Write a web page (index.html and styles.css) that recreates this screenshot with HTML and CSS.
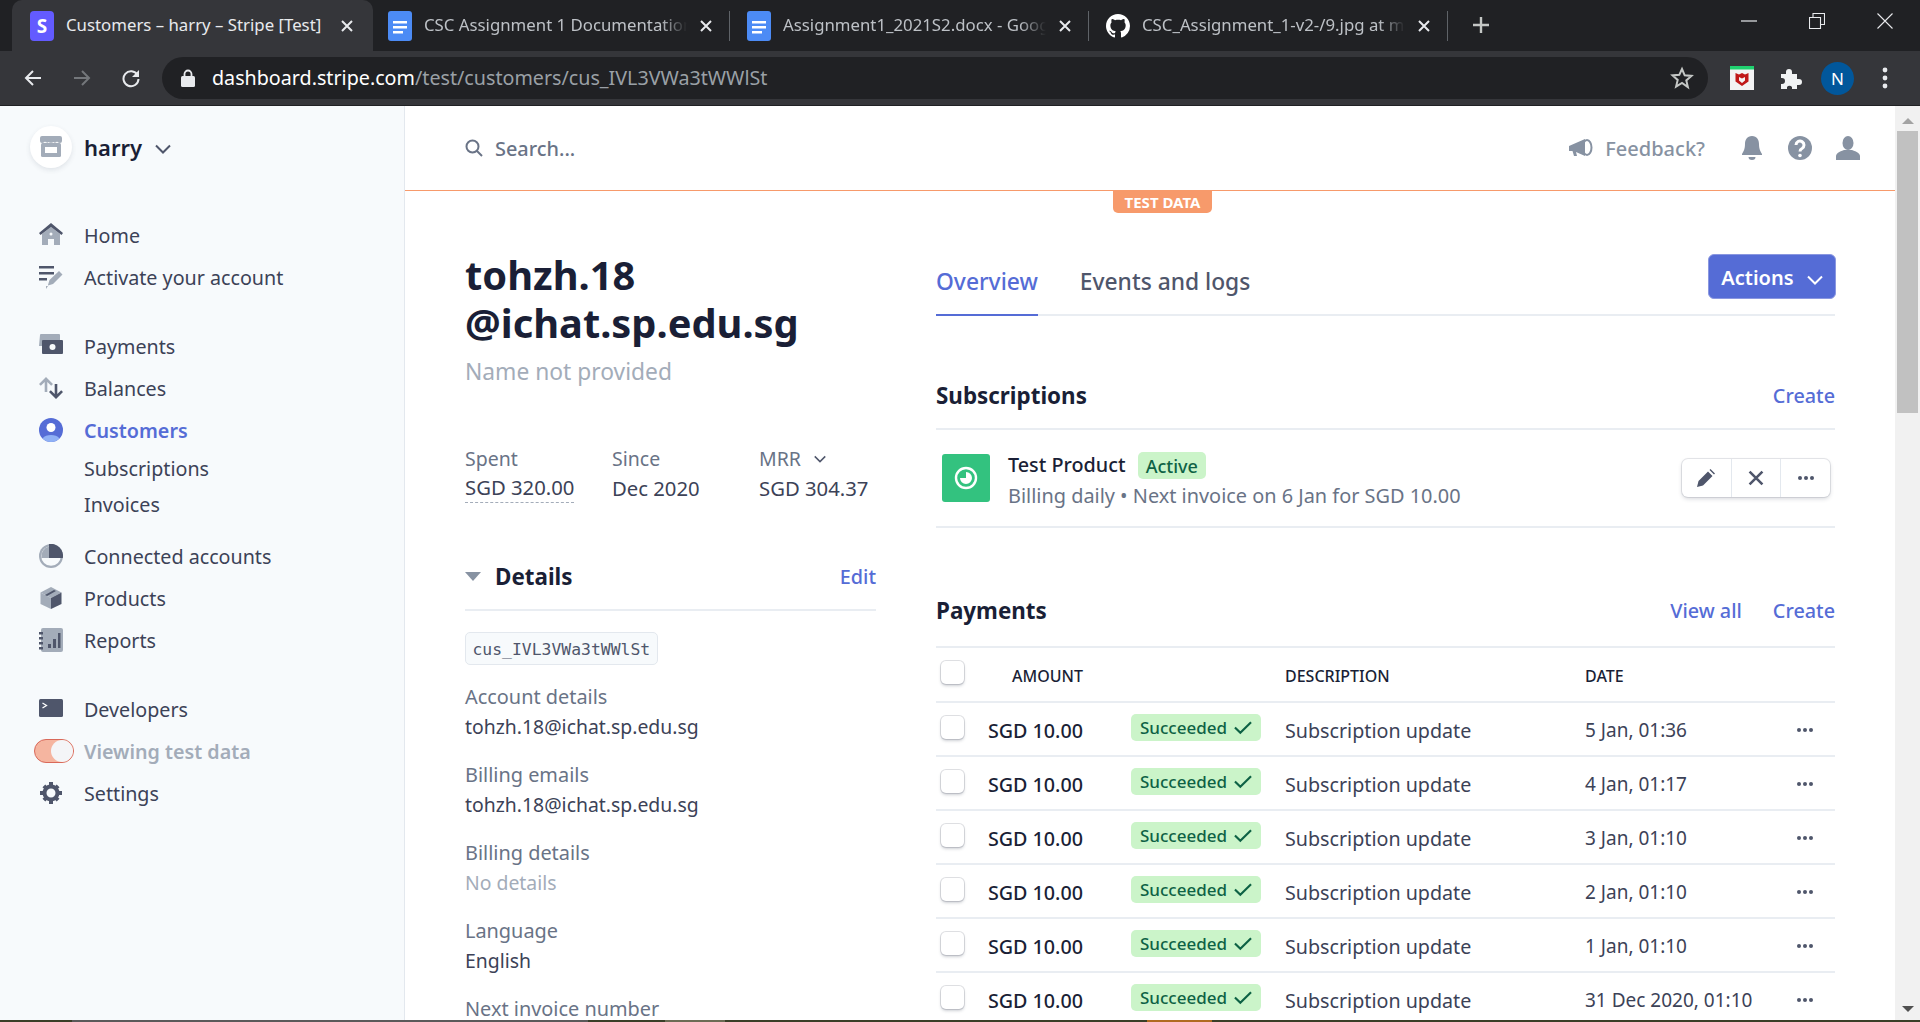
FILE: index.html
```html
<!DOCTYPE html>
<html>
  <head>
    <meta charset="utf-8">
    <title>Customers – harry – Stripe [Test]</title>
    <link rel="stylesheet" href="styles.css">
  </head>
  <body>
    <svg class="defs" width="0" height="0">
      <symbol id="doc" viewBox="0 0 24 30"><rect width="24" height="30" rx="3" fill="#4c8bf5"/><path d="M5 10h14v2.600H5zM5 15h14v2.600H5zM5 20h10v2.600H5z" fill="#fff"/></symbol>
      <symbol id="close" viewBox="0 0 14 14"><path d="M2 2l10 10M12 2L2 12" stroke="currentColor" stroke-width="2" fill="none"/></symbol>
      <symbol id="dots" viewBox="0 0 18 6"><circle cx="3" cy="3" r="2"/><circle cx="9" cy="3" r="2"/><circle cx="15" cy="3" r="2"/></symbol>
      <symbol id="check" viewBox="0 0 18 14"><path d="M1.500 7l5 5L16.500 2" stroke="#0e6245" stroke-width="2" fill="none"/></symbol>
      <symbol id="chev" viewBox="0 0 16 10"><path d="M1 1.500l7 7 7-7" stroke="currentColor" stroke-width="2" fill="none"/></symbol>
    </svg>

    <div class="tabstrip">
      <div class="tab tab-active">
        <span class="fav-stripe">S</span>
        <span class="tab-title">Customers – harry – Stripe [Test]</span>
        <svg class="tab-close"><use href="#close"/></svg>
      </div>
      <div class="tab">
        <svg class="fav"><use href="#doc"/></svg>
        <span class="tab-title">CSC Assignment 1 Documentation</span>
        <svg class="tab-close"><use href="#close"/></svg>
      </div>
      <div class="tab">
        <svg class="fav"><use href="#doc"/></svg>
        <span class="tab-title">Assignment1_2021S2.docx - Google Docs</span>
        <svg class="tab-close"><use href="#close"/></svg>
      </div>
      <div class="tab">
        <svg class="fav fav-gh" viewBox="0 0 16 16"><path fill="#fff" d="M8 0C3.58 0 0 3.58 0 8c0 3.54 2.29 6.53 5.47 7.59.4.07.55-.17.55-.38 0-.19-.01-.82-.01-1.49-2.01.37-2.53-.49-2.69-.94-.09-.23-.48-.94-.82-1.13-.28-.15-.68-.52-.01-.53.63-.01 1.08.58 1.23.82.72 1.21 1.87.87 2.33.66.07-.52.28-.87.51-1.07-1.78-.2-3.64-.89-3.64-3.95 0-.87.31-1.59.82-2.15-.08-.2-.36-1.02.08-2.12 0 0 .67-.21 2.2.82.64-.18 1.32-.27 2-.27.68 0 1.36.09 2 .27 1.53-1.04 2.2-.82 2.2-.82.44 1.1.16 1.92.08 2.12.51.56.82 1.27.82 2.15 0 3.07-1.87 3.75-3.65 3.95.29.25.54.73.54 1.48 0 1.07-.01 1.93-.01 2.2 0 .21.15.46.55.38A8.013 8.013 0 0016 8c0-4.42-3.58-8-8-8z"/></svg>
        <span class="tab-title">CSC_Assignment_1-v2-/9.jpg at main</span>
        <svg class="tab-close"><use href="#close"/></svg>
      </div>
      <svg class="newtab" viewBox="0 0 18 18"><path d="M9 1v16M1 9h16" stroke="#c4c7c5" stroke-width="2.400"/></svg>
      <div class="winctl">
        <svg viewBox="0 0 16 16"><path d="M0 8h16" stroke="#e8eaed" stroke-width="1.200"/></svg>
        <svg viewBox="0 0 16 16"><path d="M.5 4.500h11v11H.5zM4 4.500V.5h11.500v11H11.500" stroke="#e8eaed" stroke-width="1.100" fill="none"/></svg>
        <svg viewBox="0 0 16 16"><path d="M.5.5l15 15M15.500.5l-15 15" stroke="#e8eaed" stroke-width="1.100"/></svg>
      </div>
    </div>

    <div class="toolbar">
      <svg class="tool" viewBox="0 0 20 20"><path d="M18 10H3M10 3l-7 7 7 7" stroke="#e8eaed" stroke-width="2" fill="none"/></svg>
      <svg class="tool" viewBox="0 0 20 20"><path d="M2 10h15M10 3l7 7-7 7" stroke="#74777b" stroke-width="2" fill="none"/></svg>
      <svg class="tool" viewBox="0 0 20 20"><path d="M16.500 7A7.500 7.500 0 1 0 17.500 11" stroke="#e8eaed" stroke-width="2" fill="none"/><path d="M18 2v7h-7z" fill="#e8eaed"/></svg>
      <div class="omnibox">
        <svg class="lock" viewBox="0 0 14 18"><path d="M3.500 8V5a3.500 3.500 0 0 1 7 0v3" stroke="#e8eaed" stroke-width="1.800" fill="none"/><rect y="7" width="14" height="11" rx="1.500" fill="#e8eaed"/></svg>
        <span class="url"><b>dashboard.stripe.com</b>/test/customers/cus_IVL3VWa3tWWlSt</span>
        <svg class="star" viewBox="0 0 24 24"><path d="M12 3l2.700 6.300 6.800.6-5.200 4.500 1.600 6.700L12 17l-5.900 3.600 1.600-6.700-5.200-4.500 6.800-.6z" stroke="#c4c7c5" stroke-width="2" fill="none"/></svg>
      </div>
      <div class="ext-mcafee">
        <svg viewBox="0 0 24 24"><rect width="24" height="24" fill="#f3f3f3"/><rect width="24" height="3.500" fill="#1fd16f"/><path d="M5.500 7l3.500 1.500L12 7l3 1.500L18.500 7v8.500L12 20l-6.500-4.500z" fill="#c01818"/><path d="M9 11l3 1.500 3-1.500v3.500L12 17l-3-2.500z" fill="#f3f3f3"/></svg>
      </div>
      <svg class="ext-puzzle" viewBox="0 0 24 24"><path fill="#f1f3f4" d="M3 8h5V6a3 3 0 0 1 6 0v2h5v5h2a3 3 0 0 1 0 6h-2v4h-5v-2a3 3 0 0 0-5 0v2H3v-5h1a3 3 0 0 0 0-6H3z"/></svg>
      <span class="avatar">N</span>
      <svg class="menu" viewBox="0 0 6 24"><circle cx="3" cy="4" r="2.400"/><circle cx="3" cy="12" r="2.400"/><circle cx="3" cy="20" r="2.400"/></svg>
    </div>

    <div class="app">
      <aside class="sidebar">
        <div class="account">
          <span class="account-logo">
            <svg viewBox="0 0 24 24"><rect x="2" y="8" width="20" height="14" rx="1.500" fill="#a3acb9"/><rect x="6" y="12" width="12" height="6" fill="#fff"/><path d="M3 1h18a2 2 0 0 1 2 2v3a2 2 0 0 1-2 2c-1.500 0-2.500-1-3-1.500C17 8 15 8 14.500 7c-.5 1-4.500 1-5 0C9 8 7 8 6 6.500 5.500 7 4.500 8 3 8a2 2 0 0 1-2-2V3a2 2 0 0 1 2-2z" fill="#a3acb9"/></svg>
          </span>
          <span class="account-name">harry</span>
          <svg class="account-chev"><use href="#chev"/></svg>
        </div>

        <nav class="nav-group nav-first">
          <a class="nav-row">
            <svg class="nav-icon" viewBox="0 0 24 24"><path d="M3 11l9-7 9 7v11h-6v-6H9v6H3z" fill="#a3acb9"/><path d="M12 0L0 10l1.500 2L12 4l10.500 8 1.500-2z" fill="#4f566b"/><circle cx="12" cy="11" r="1.500" fill="#f7fafc"/></svg>
            Home
          </a>
          <a class="nav-row">
            <svg class="nav-icon" viewBox="0 0 24 24"><path d="M0 1h15v2.400H0zM0 7h15v2.400H0zM0 13h8v2.400H0z" fill="#4f566b"/><path d="M9 20l1.500-5L20 6l3.500 3.500-9.500 9.500-5 1.500zM7 24l2-3h-2z" fill="#a3acb9"/></svg>
            Activate your account
          </a>
        </nav>

        <nav class="nav-group nav-second">
          <a class="nav-row">
            <svg class="nav-icon" viewBox="0 0 24 24"><path d="M1 1a1 1 0 0 1 1-1h18a1 1 0 0 1 1 1v11H0z" fill="#a3acb9"/><rect x="3" y="6" width="21" height="14" rx="1" fill="#4f566b"/><circle cx="13.500" cy="13" r="3" fill="#f7fafc"/></svg>
            Payments
          </a>
          <a class="nav-row">
            <svg class="nav-icon" viewBox="0 0 24 24"><path d="M7 1L0 8l1.800 1.800L5.700 6v10h2.600V6l3.900 3.800L14 8z" fill="#a3acb9"/><path d="M17 23l7-7-1.800-1.800L18.300 18V8h-2.600v10l-3.900-3.800L10 16z" fill="#4f566b"/></svg>
            Balances
          </a>
          <a class="nav-row nav-active">
            <svg class="nav-icon" viewBox="0 0 24 24"><circle cx="12" cy="12" r="12" fill="#556cd6"/><circle cx="12" cy="9.500" r="4.500" fill="#fff"/><path d="M3.500 20.500C5.500 17.500 8.500 17 12 17s6.500.5 8.500 3.500A12 12 0 0 1 12 24a12 12 0 0 1-8.500-3.500z" fill="#8fb0f5"/></svg>
            Customers
          </a>
          <a class="nav-sub">Subscriptions</a>
          <a class="nav-sub">Invoices</a>
        </nav>

        <nav class="nav-group nav-third">
          <a class="nav-row">
            <svg class="nav-icon" viewBox="0 0 24 24"><circle cx="12" cy="12" r="12" fill="#a3acb9"/><circle cx="12" cy="12" r="9.800" fill="#f7fafc"/><path d="M10 2.500A9.800 9.800 0 0 0 2.500 14H10z" fill="#a3acb9"/><path d="M10 0a12 12 0 0 1 13.800 14H10z" fill="#4f566b"/></svg>
            Connected accounts
          </a>
          <a class="nav-row">
            <svg class="nav-icon" viewBox="0 0 24 24"><path d="M12 1l10.500 5.500L12 12 1.500 6.500z" fill="#a3acb9"/><path d="M1.500 6.500L12 12v11L1.500 18z" fill="#a3acb9"/><path d="M22.500 6.500L12 12v11l10.500-5z" fill="#4f566b"/><path d="M6 9l9-5 2 1-9 5z" fill="#4f566b"/></svg>
            Products
          </a>
          <a class="nav-row">
            <svg class="nav-icon" viewBox="0 0 24 24"><rect x="2" width="22" height="24" rx="2" fill="#a3acb9"/><path d="M0 4h4v2.500H0zM0 9h4v2.500H0zM0 14h4v2.500H0zM0 19h4v2.500H0z" fill="#4f566b"/><path d="M9 16h3v4H9zM14 11h3v9h-3zM19 5h2.500v15H19z" fill="#4f566b"/></svg>
            Reports
          </a>
        </nav>

        <nav class="nav-group nav-fourth">
          <a class="nav-row">
            <svg class="nav-icon" viewBox="0 0 24 24"><rect y="2" width="24" height="18" rx="1.500" fill="#4f566b"/><path d="M3.500 6l4 2.500-4 2.500" stroke="#fff" stroke-width="1.300" fill="none"/></svg>
            Developers
          </a>
          <a class="nav-row nav-muted">
            <span class="toggle"><span class="toggle-knob"></span></span>
            Viewing test data
          </a>
          <a class="nav-row">
            <svg class="nav-icon" viewBox="0 0 24 24"><circle cx="12" cy="12" r="6.500" fill="none" stroke="#4f566b" stroke-width="4"/><path d="M10 1h4v5h-4zM10 18h4v5h-4zM1 10h5v4H1zM18 10h5v4h-5zM3.500 6.300l2.800-2.800 3 3-2.800 2.800zM14.700 17.500l2.800-2.800 3 3-2.800 2.800zM3.500 17.700l3-3 2.800 2.800-3 3zM14.700 6.500l3-3 2.800 2.800-3 3z" fill="#4f566b"/></svg>
            Settings
          </a>
        </nav>
      </aside>

      <main class="main">
        <header class="topbar">
          <svg class="search-icon" viewBox="0 0 18 18"><circle cx="7.500" cy="7.500" r="6" stroke="#697386" stroke-width="2" fill="none"/><path d="M12 12l5 5" stroke="#697386" stroke-width="2"/></svg>
          <span class="search-text">Search...</span>
          <svg class="feedback-icon" viewBox="0 0 24 18"><path d="M0 7l16-7v17L7 13l1 4H5l-1.500-5H0z" fill="#8792a2"/><ellipse cx="18" cy="8.500" rx="4.500" ry="7.500" fill="none" stroke="#8792a2" stroke-width="2"/></svg>
          <span class="feedback-text">Feedback?</span>
          <svg class="top-icon" viewBox="0 0 24 24"><path d="M12 0c-5 0-7 4-7 8 0 6-2 8-3 10v1h20v-1c-1-2-3-4-3-10 0-4-2-8-7-8z" fill="#8792a2"/><path d="M8.500 21h7a3.500 3 0 0 1-7 0z" fill="#8792a2"/></svg>
          <svg class="top-icon" viewBox="0 0 24 24"><circle cx="12" cy="12" r="12" fill="#8792a2"/><path d="M8 9a4 4 0 1 1 6 3.500c-1.500.8-2 1.500-2 3" stroke="#fff" stroke-width="3" fill="none"/><circle cx="12" cy="19.500" r="1.800" fill="#fff"/></svg>
          <svg class="top-icon" viewBox="0 0 24 24"><ellipse cx="12" cy="7" rx="5.500" ry="7" fill="#8792a2"/><path d="M0 24v-4c0-3 5-5 8-6h8c3 1 8 3 8 6v4z" fill="#8792a2"/></svg>
        </header>
        <span class="test-tag">TEST DATA</span>

        <div class="content">
          <section class="left-col">
            <h1 class="cust-title">tohzh.18<br>@ichat.sp.edu.sg</h1>
            <p class="cust-name">Name not provided</p>

            <div class="stats">
              <div class="stat stat-spent">
                <span class="stat-label">Spent</span>
                <span class="stat-value stat-dashed">SGD 320.00</span>
              </div>
              <div class="stat stat-since">
                <span class="stat-label">Since</span>
                <span class="stat-value">Dec 2020</span>
              </div>
              <div class="stat">
                <span class="stat-label">MRR <svg class="mrr-chev"><use href="#chev"/></svg></span>
                <span class="stat-value">SGD 304.37</span>
              </div>
            </div>

            <div class="details-head">
              <span class="caret"></span>
              <h2 class="details-title">Details</h2>
              <a class="link">Edit</a>
            </div>

            <code class="cust-id">cus_IVL3VWa3tWWlSt</code>

            <dl class="props">
              <dt>Account details</dt>
              <dd>tohzh.18@ichat.sp.edu.sg</dd>
              <dt>Billing emails</dt>
              <dd>tohzh.18@ichat.sp.edu.sg</dd>
              <dt>Billing details</dt>
              <dd class="prop-empty">No details</dd>
              <dt>Language</dt>
              <dd>English</dd>
              <dt>Next invoice number</dt>
            </dl>
          </section>

          <section class="right-col">
            <div class="tabs">
              <a class="tabs-item tabs-current">Overview</a>
              <a class="tabs-item">Events and logs</a>
              <button class="actions">Actions <svg class="actions-chev"><use href="#chev"/></svg></button>
            </div>

            <div class="section-head section-subs">
              <h2 class="section-title">Subscriptions</h2>
              <a class="link">Create</a>
            </div>
            <div class="sub-row">
              <span class="sub-icon">
                <svg viewBox="0 0 24 24"><circle cx="12" cy="12" r="10" fill="none" stroke="#fff" stroke-width="2.400"/><path d="M12 6a6 6 0 1 1-6 6h6z" fill="#fff"/></svg>
              </span>
              <div class="sub-info">
                <div class="sub-name">Test Product <span class="badge badge-active">Active</span></div>
                <div class="sub-meta">Billing daily • Next invoice on 6 Jan for SGD 10.00</div>
              </div>
              <div class="btn-group">
                <span class="btn-cell"><svg class="btn-icon" viewBox="0 0 18 18"><path d="M0 18l1.500-6L11 2.500l4.500 4.500L6 16.500zM12.500 1l1-1L18 4.500l-1 1z" fill="#4f566b"/></svg></span>
                <span class="btn-cell"><svg class="btn-icon-x"><use href="#close"/></svg></span>
                <span class="btn-cell"><svg class="dots"><use href="#dots"/></svg></span>
              </div>
            </div>

            <div class="section-head section-pay">
              <h2 class="section-title">Payments</h2>
              <a class="link link-viewall">View all</a>
              <a class="link">Create</a>
            </div>

            <div class="pay-table">
              <div class="pay-row pay-head">
                <span class="check"></span>
                <span class="col-amount">AMOUNT</span>
                <span class="col-status"></span>
                <span class="col-desc">DESCRIPTION</span>
                <span class="col-date">DATE</span>
              </div>
              <div class="pay-row">
                <span class="check"></span>
                <span class="col-amount">SGD 10.00</span>
                <span class="col-status"><span class="badge badge-ok">Succeeded <svg class="ok-check"><use href="#check"/></svg></span></span>
                <span class="col-desc">Subscription update</span>
                <span class="col-date">5 Jan, 01:36</span>
                <svg class="dots"><use href="#dots"/></svg>
              </div>
              <div class="pay-row">
                <span class="check"></span>
                <span class="col-amount">SGD 10.00</span>
                <span class="col-status"><span class="badge badge-ok">Succeeded <svg class="ok-check"><use href="#check"/></svg></span></span>
                <span class="col-desc">Subscription update</span>
                <span class="col-date">4 Jan, 01:17</span>
                <svg class="dots"><use href="#dots"/></svg>
              </div>
              <div class="pay-row">
                <span class="check"></span>
                <span class="col-amount">SGD 10.00</span>
                <span class="col-status"><span class="badge badge-ok">Succeeded <svg class="ok-check"><use href="#check"/></svg></span></span>
                <span class="col-desc">Subscription update</span>
                <span class="col-date">3 Jan, 01:10</span>
                <svg class="dots"><use href="#dots"/></svg>
              </div>
              <div class="pay-row">
                <span class="check"></span>
                <span class="col-amount">SGD 10.00</span>
                <span class="col-status"><span class="badge badge-ok">Succeeded <svg class="ok-check"><use href="#check"/></svg></span></span>
                <span class="col-desc">Subscription update</span>
                <span class="col-date">2 Jan, 01:10</span>
                <svg class="dots"><use href="#dots"/></svg>
              </div>
              <div class="pay-row">
                <span class="check"></span>
                <span class="col-amount">SGD 10.00</span>
                <span class="col-status"><span class="badge badge-ok">Succeeded <svg class="ok-check"><use href="#check"/></svg></span></span>
                <span class="col-desc">Subscription update</span>
                <span class="col-date">1 Jan, 01:10</span>
                <svg class="dots"><use href="#dots"/></svg>
              </div>
              <div class="pay-row">
                <span class="check"></span>
                <span class="col-amount">SGD 10.00</span>
                <span class="col-status"><span class="badge badge-ok">Succeeded <svg class="ok-check"><use href="#check"/></svg></span></span>
                <span class="col-desc">Subscription update</span>
                <span class="col-date">31 Dec 2020, 01:10</span>
                <svg class="dots"><use href="#dots"/></svg>
              </div>
            </div>
          </section>
        </div>
      </main>

      <div class="scrollbar">
        <span class="scroll-up"></span>
        <span class="scroll-thumb"></span>
        <span class="scroll-down"></span>
      </div>
    </div>

    <div class="desktop-edge">
      <span class="edge-a"></span>
      <span class="edge-b"></span>
      <span class="edge-c"></span>
      <span class="edge-d"></span>
      <span class="edge-e"></span>
    </div>
  </body>
</html>
```

FILE: styles.css
```css
* {
  box-sizing: border-box;
}
html,
body {
  margin: 0;
  width: 1920px;
  height: 1022px;
  overflow: hidden;
  background: #fff;
  font-family: 'Noto Sans', 'Open Sans', sans-serif;
  color: #3c4257;
}
h1,
h2,
p,
dl,
dd {
  margin: 0;
}
.defs {
  position: absolute;
}

/* browser chrome */
.tabstrip {
  height: 51px;
  background: #202124;
  display: flex;
  padding-left: 12px;
}
.tab {
  width: 359px;
  height: 51px;
  flex: none;
  display: flex;
  align-items: center;
  padding: 0 17px 0 17px;
  position: relative;
  color: #bdc1c6;
}
.tab::after {
  content: '';
  position: absolute;
  right: 0;
  top: 11px;
  height: 30px;
  width: 1px;
  background: #5f6368;
}
.tab-active {
  width: 361px;
  margin-right: -2px;
  background: #35363a;
  color: #e8eaed;
  border-radius: 10px 10px 0 0;
  padding: 0 19px 0 18px;
}
.tab-active::after {
  display: none;
}
.tab-title {
  flex: 1;
  min-width: 0;
  margin: 0 0 3px 12px;
  font-size: 16.800px;
  white-space: nowrap;
  overflow: hidden;
  -webkit-mask-image: linear-gradient(to right, #000 90%, transparent 100%);
  mask-image: linear-gradient(to right, #000 90%, transparent 100%);
}
.tab-active .tab-title {
  -webkit-mask-image: none;
  mask-image: none;
}
.tab-close {
  width: 14px;
  height: 14px;
  flex: none;
  margin-left: 12px;
  color: #e8eaed;
}
.fav {
  width: 24px;
  height: 30px;
  flex: none;
}
.fav-gh {
  height: 24px;
}
.fav-stripe {
  width: 24px;
  height: 30px;
  flex: none;
  border-radius: 4px;
  background: #635bff;
  color: #fff;
  font-weight: 700;
  font-size: 19px;
  line-height: 30px;
  text-align: center;
}
.newtab {
  width: 18px;
  height: 18px;
  margin: 16px 0 0 24px;
}
.winctl {
  margin-left: auto;
  display: flex;
  gap: 52px;
  padding: 13px 27px 0 0;
}
.winctl svg {
  width: 16px;
  height: 16px;
}

.toolbar {
  height: 55px;
  background: #35363a;
  border-bottom: 1px solid #202124;
  display: flex;
  align-items: center;
  padding-left: 23px;
}
.tool {
  width: 20px;
  height: 20px;
  margin-right: 29px;
}
.omnibox {
  width: 1546px;
  height: 42px;
  margin-left: -8px;
  border-radius: 21px;
  background: #202124;
  display: flex;
  align-items: center;
  padding: 0 14px 0 19px;
}
.lock {
  width: 14px;
  height: 18px;
}
.url {
  margin: 0 0 2px 17px;
  font-size: 19.700px;
  color: #9aa0a6;
  flex: 1;
}
.url b {
  font-weight: 400;
  color: #fff;
}
.star {
  width: 24px;
  height: 24px;
}
.ext-mcafee {
  width: 24px;
  height: 24px;
  margin-left: 22px;
}
.ext-mcafee svg {
  display: block;
}
.ext-puzzle {
  width: 24px;
  height: 24px;
  margin-left: 24px;
}
.avatar {
  width: 33px;
  height: 33px;
  margin-left: 19px;
  border-radius: 50%;
  background: #01579b;
  color: #fff;
  font-size: 17px;
  line-height: 33px;
  text-align: center;
}
.menu {
  width: 6px;
  height: 24px;
  margin-left: 28px;
  fill: #e8eaed;
}

/* app layout */
.app {
  display: flex;
  height: 914px;
}
.sidebar {
  width: 405px;
  flex: none;
  background: #f7fafc;
  border-right: 1px solid #e3e8ee;
  padding: 20px 0 0 39px;
}
.account {
  display: flex;
  align-items: center;
  margin-left: -9px;
}
.account-logo {
  width: 42px;
  height: 42px;
  border-radius: 50%;
  background: #fff;
  box-shadow: 0 2px 5px rgba(60, 66, 87, 0.12);
  display: flex;
  align-items: center;
  justify-content: center;
}
.account-logo svg {
  width: 24px;
  height: 24px;
}
.account-name {
  margin-left: 12px;
  font-size: 22px;
  font-weight: 600;
  color: #1a1f36;
}
.account-chev {
  width: 16px;
  height: 10px;
  margin: 4px 0 0 13px;
  color: #4f566b;
}
.nav-first {
  margin-top: 46px;
}
.nav-second {
  margin-top: 27px;
}
.nav-third {
  margin-top: 12px;
}
.nav-fourth {
  margin-top: 27px;
}
.nav-row {
  height: 42px;
  display: flex;
  align-items: center;
  gap: 21px;
  font-size: 19.700px;
}
.nav-icon {
  width: 24px;
  height: 24px;
  flex: none;
}
.nav-active {
  color: #556cd6;
  font-weight: 600;
}
.nav-muted {
  color: #a3acb9;
  font-weight: 600;
}
.nav-sub {
  display: block;
  height: 36px;
  line-height: 36px;
  padding-left: 45px;
  font-size: 19.700px;
}
.toggle {
  width: 40px;
  height: 24px;
  margin: 0 -11px 0 -5px;
  border-radius: 12px;
  background: #f5b5a0;
  border: 1px solid #d9695a;
  position: relative;
  flex: none;
}
.toggle-knob {
  position: absolute;
  right: 0;
  top: 0;
  width: 22px;
  height: 22px;
  border-radius: 50%;
  background: #f4f5f7;
}

.main {
  flex: 1;
  position: relative;
  overflow: hidden;
}
.topbar {
  height: 85px;
  border-bottom: 1px solid #f79a6b;
  display: flex;
  align-items: center;
  padding: 0 35px 0 60px;
}
.search-icon {
  width: 18px;
  height: 18px;
}
.search-text {
  margin-left: 12px;
  font-size: 19.900px;
  font-weight: 500;
  color: #697386;
  flex: 1;
}
.feedback-icon {
  width: 24px;
  height: 18px;
}
.feedback-text {
  margin: 0 35px 0 12px;
  font-size: 20px;
  font-weight: 500;
  color: #8792a2;
}
.top-icon {
  width: 24px;
  height: 24px;
  margin-left: 24px;
}
.feedback-text + .top-icon {
  margin-left: 0;
}
.test-tag {
  position: absolute;
  left: 708px;
  top: 85px;
  width: 99px;
  height: 22px;
  border-radius: 0 0 5px 5px;
  background: #f79a6b;
  color: #fff;
  font-size: 15px;
  font-weight: 700;
  line-height: 22px;
  text-align: center;
}
.content {
  display: flex;
  gap: 60px;
  padding: 60px 60px 0 60px;
}

/* left column */
.left-col {
  width: 411px;
  flex: none;
}
.cust-title {
  font-size: 39.800px;
  line-height: 48px;
  font-weight: 700;
  color: #1a1f36;
}
.cust-name {
  margin-top: 10px;
  font-size: 22.800px;
  line-height: 30px;
  color: #a3acb9;
}
.stats {
  display: flex;
  margin-top: 57px;
}
.stat {
  display: flex;
  flex-direction: column;
  align-items: flex-start;
}
.stat-spent,
.stat-since {
  width: 147px;
}
.stat-label {
  font-size: 19.500px;
  line-height: 30px;
  color: #697386;
}
.stat-value {
  margin-top: -1px;
  font-size: 20.300px;
  line-height: 30px;
  color: #3c4257;
}
.stat-dashed {
  border-bottom: 1px dashed #a3acb9;
  line-height: 29px;
}
.mrr-chev {
  width: 12px;
  height: 8px;
  margin-left: 8px;
  color: #4f566b;
  vertical-align: 3px;
}
.details-head {
  display: flex;
  align-items: center;
  margin-top: 53px;
  height: 55px;
  border-bottom: 2px solid #e9edf2;
  padding-bottom: 12px;
}
.caret {
  width: 0;
  height: 0;
  border-left: 8px solid transparent;
  border-right: 8px solid transparent;
  border-top: 9px solid #8792a2;
}
.details-title {
  flex: 1;
  margin-left: 14px;
  font-size: 22.400px;
  font-weight: 700;
  color: #1a1f36;
}
.link {
  font-size: 19.800px;
  color: #556cd6;
  font-weight: 500;
}
.cust-id {
  display: inline-block;
  margin-top: 21px;
  height: 33px;
  padding: 0 6.500px;
  border: 1px solid #e3e8ee;
  border-radius: 5px;
  background: #f7fafc;
  font-family: 'DejaVu Sans Mono', monospace;
  font-size: 16.400px;
  line-height: 33px;
  color: #4f566b;
}
.props {
  margin-top: 17px;
}
.props dt {
  font-size: 19.900px;
  line-height: 30px;
  color: #697386;
}
.props dd {
  font-size: 19.400px;
  line-height: 30px;
  margin-bottom: 18px;
  color: #3c4257;
}
.props .prop-empty {
  color: #a3acb9;
}

/* right column */
.right-col {
  flex: 1;
  min-width: 0;
}
.tabs {
  display: flex;
  align-items: flex-start;
  height: 65px;
  gap: 42px;
  border-bottom: 2px solid #e9edf2;
  position: relative;
}
.tabs-item {
  font-size: 22.800px;
  line-height: 30px;
  padding: 16px 0 17px;
  font-weight: 500;
  color: #4f566b;
  height: 65px;
}
.tabs-current {
  color: #556cd6;
  border-bottom: 2px solid #556cd6;
}
.actions {
  margin: 3px -1px 0 auto;
  width: 128px;
  height: 45px;
  border: 1px solid #8a97e0;
  border-radius: 6px;
  background: #556cd6;
  color: #fff;
  font-family: inherit;
  font-size: 20px;
  font-weight: 600;
  padding: 1px 0 0;
}
.actions-chev {
  width: 16px;
  height: 10px;
  margin-left: 8px;
}
.section-head {
  display: flex;
  align-items: center;
  height: 42px;
}
.section-subs {
  margin-top: 58px;
}
.section-pay {
  margin-top: 61px;
}
.section-title {
  flex: 1;
  font-size: 22.400px;
  font-weight: 700;
  color: #1a1f36;
}
.link-viewall {
  margin-right: 31px;
}
.sub-row {
  height: 100px;
  margin-top: 12px;
  border-top: 2px solid #e9edf2;
  border-bottom: 2px solid #e9edf2;
  display: flex;
  align-items: center;
  padding: 0 5px 0 6px;
}
.sub-icon {
  width: 48px;
  height: 48px;
  border-radius: 3px;
  background: #33c27f;
  display: flex;
  align-items: center;
  justify-content: center;
}
.sub-icon svg {
  width: 24px;
  height: 24px;
}
.sub-info {
  flex: 1;
  margin-left: 18px;
  padding-top: 4px;
}
.sub-name {
  font-size: 19.800px;
  line-height: 30px;
  font-weight: 500;
  color: #1a1f36;
}
.sub-meta {
  margin-top: 1px;
  font-size: 19.900px;
  line-height: 30px;
  color: #697386;
}
.badge {
  display: inline-flex;
  align-items: center;
  border-radius: 5px;
  background: #cbf4c9;
  color: #0e6245;
  font-size: 17px;
  font-weight: 500;
}
.badge-active {
  height: 27px;
  padding: 0 8px;
  margin-left: 7px;
  font-size: 18px;
  vertical-align: -1px;
}
.badge-ok {
  width: 130px;
  height: 27px;
  padding-left: 9px;
  margin-bottom: 6px;
  white-space: nowrap;
}
.ok-check {
  width: 20px;
  height: 15px;
  margin-left: 6px;
}
.btn-group {
  display: flex;
  width: 148px;
  height: 38px;
  border-radius: 6px;
  background: #fff;
  box-shadow: 0 0 0 1px rgba(60, 66, 87, 0.12), 0 2px 4px rgba(60, 66, 87, 0.2);
}
.btn-cell {
  flex: 1;
  display: flex;
  align-items: center;
  justify-content: center;
  border-left: 1px solid #e3e8ee;
}
.btn-cell:first-child {
  border-left: 0;
}
.btn-icon {
  width: 18px;
  height: 18px;
}
.btn-icon-x {
  width: 18px;
  height: 18px;
  color: #4f566b;
}
.dots {
  width: 18px;
  height: 6px;
  fill: #4f566b;
  flex: none;
}

.pay-table {
  margin-top: 15px;
  border-top: 2px solid #e9edf2;
}
.pay-row {
  height: 54px;
  display: flex;
  align-items: center;
  border-bottom: 2px solid #e9edf2;
  padding-left: 5px;
  padding-top: 2px;
  font-size: 19.700px;
}
.check {
  width: 23px;
  height: 23px;
  flex: none;
  margin: -6px 0 0;
  border-radius: 5px;
  background: #fff;
  box-shadow: 0 0 0 1px rgba(60, 66, 87, 0.16), 0 2px 3px rgba(60, 66, 87, 0.25);
}
.col-amount {
  width: 119px;
  text-align: right;
  font-weight: 500;
  color: #1a1f36;
}
.col-status {
  padding-left: 48px;
  width: 202px;
}
.col-desc {
  width: 300px;
  color: #3c4257;
}
.col-date {
  width: 211px;
  font-size: 19px;
  color: #3c4257;
}
.pay-head {
  height: 55px;
  font-size: 16px;
}
.pay-head .col-amount,
.pay-head .col-desc,
.pay-head .col-date {
  font-size: 16px;
  font-weight: 500;
  color: #1a1f36;
}

.scrollbar {
  width: 25px;
  flex: none;
  background: #f1f1f1;
  padding: 12px 2px 8px;
  display: flex;
  flex-direction: column;
  align-items: center;
}
.scroll-up {
  width: 0;
  height: 0;
  border-left: 6px solid transparent;
  border-right: 6px solid transparent;
  border-bottom: 6px solid #a3a3a3;
}
.scroll-thumb {
  width: 21px;
  height: 282px;
  margin-top: 7px;
  background: #c1c1c1;
}
.scroll-down {
  width: 0;
  height: 0;
  margin-top: auto;
  border-left: 6px solid transparent;
  border-right: 6px solid transparent;
  border-top: 6px solid #505050;
}

.desktop-edge {
  height: 2px;
  display: flex;
  background: #3a3f28;
}
.desktop-edge span {
  display: block;
  height: 2px;
}
.edge-a {
  width: 72px;
}
.edge-b {
  width: 516px;
  background: #5a5a5a;
}
.edge-c {
  width: 77px;
}
.edge-d {
  width: 60px;
  background: #6c6c55;
}
.edge-e {
  width: 65px;
  margin-left: 422px;
  background: #b06a20;
}
```
